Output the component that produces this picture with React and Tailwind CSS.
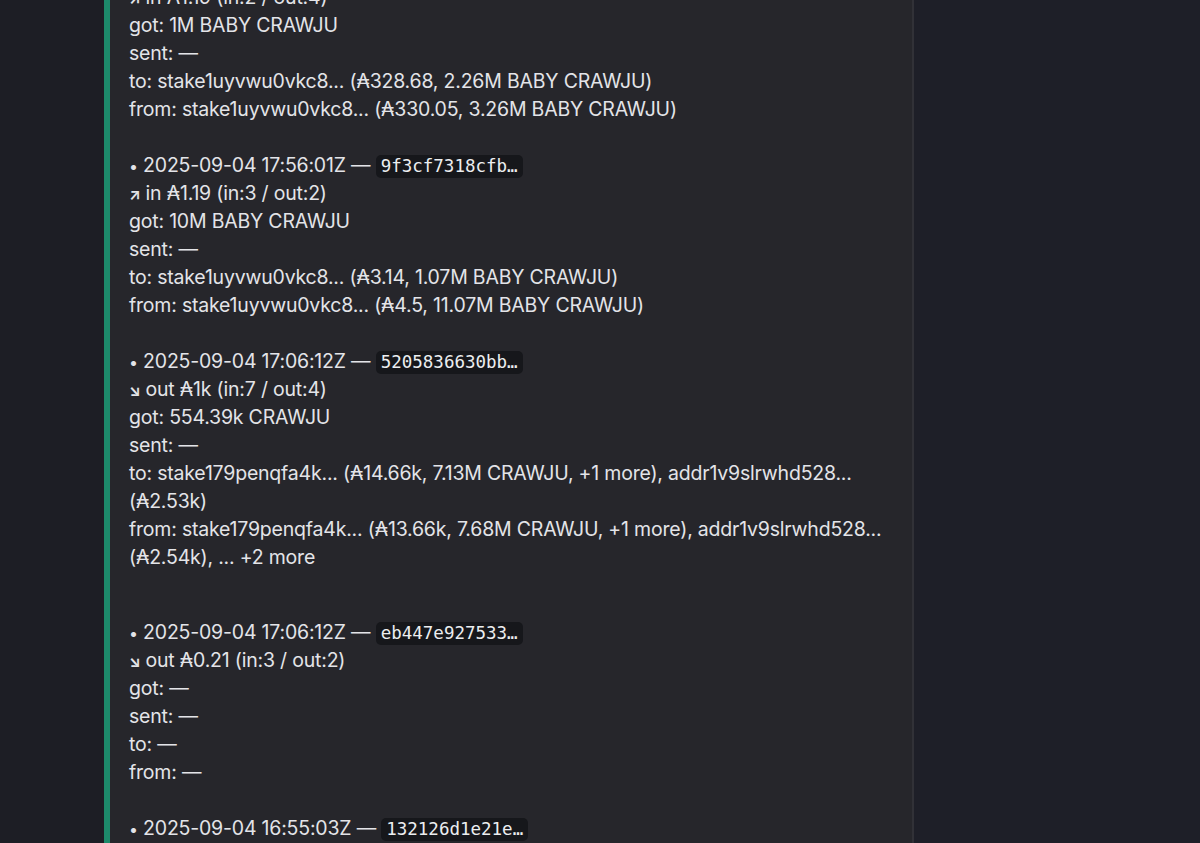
import React from 'react';

// Discord-style embed listing wallet transactions
const entries = [
    {
        head: null,
        dir: '↗',
        lines: [
            'in ₳1.19 (in:2 / out:4)',
            'got: 1M BABY CRAWJU',
            'sent: —',
            'to: stake1uyvwu0vkc8... (₳328.68, 2.26M BABY CRAWJU)',
            'from: stake1uyvwu0vkc8... (₳330.05, 3.26M BABY CRAWJU)',
        ],
    },
    {
        head: { time: '2025-09-04 17:56:01Z', hash: '9f3cf7318cfb…' },
        dir: '↗',
        lines: [
            'in ₳1.19 (in:3 / out:2)',
            'got: 10M BABY CRAWJU',
            'sent: —',
            'to: stake1uyvwu0vkc8... (₳3.14, 1.07M BABY CRAWJU)',
            'from: stake1uyvwu0vkc8... (₳4.5, 11.07M BABY CRAWJU)',
        ],
    },
    {
        head: { time: '2025-09-04 17:06:12Z', hash: '5205836630bb…' },
        dir: '↘',
        lines: [
            'out ₳1k (in:7 / out:4)',
            'got: 554.39k CRAWJU',
            'sent: —',
            'to: stake179penqfa4k... (₳14.66k, 7.13M CRAWJU, +1 more), addr1v9slrwhd528...',
            '(₳2.53k)',
            'from: stake179penqfa4k... (₳13.66k, 7.68M CRAWJU, +1 more), addr1v9slrwhd528...',
            '(₳2.54k), ... +2 more',
        ],
        gapAfter: true,
    },
    {
        head: { time: '2025-09-04 17:06:12Z', hash: 'eb447e927533…' },
        dir: '↘',
        lines: [
            'out ₳0.21 (in:3 / out:2)',
            'got: —',
            'sent: —',
            'to: —',
            'from: —',
        ],
    },
    {
        head: { time: '2025-09-04 16:55:03Z', hash: '132126d1e21e…' },
        lines: [],
    },
];

const Code = ({ children }) => (
    <code className="inline-block h-[23px] leading-[23px] px-[5px] rounded-[5px] bg-[#16171b] text-[17.5px] tracking-normal text-[#eceef0] align-middle"
        style={{ fontFamily: "'DejaVu Sans Mono', 'Liberation Mono', monospace" }}>
        {children}
    </code>
);

const Entry = ({ entry }) => (
    <div className={entry.gapAfter ? 'mb-[47px]' : 'mb-[28px]'}>
        {entry.head && (
            <div className="h-[28px] whitespace-nowrap">
                <span className="text-[16px]">•</span> {entry.head.time} — <Code>{entry.head.hash}</Code>
            </div>
        )}
        {entry.lines.map((line, i) => (
            <div key={i} className="h-[28px] whitespace-nowrap">
                {i === 0 && entry.dir && <span className="text-[15px] font-bold mr-[5px]">{entry.dir}</span>}
                {line}
            </div>
        ))}
    </div>
);

export default function App() {
    return (
        <div className="w-[1200px] h-[843px] overflow-hidden flex bg-[#1e1f26]"
            style={{ fontFamily: "'Inter', 'Noto Sans', 'DejaVu Sans', sans-serif" }}>
            <div className="w-[104px] flex-none bg-[#1d1e25]" />
            <div className="w-[810px] flex-none bg-[#26262b] border-l-[6px] border-[#1d8a6b] border-r-2 border-r-[#313137] overflow-hidden">
                <div className="mt-[-17px] pl-[19px] text-[19.5px] tracking-[-0.2px] leading-[28px] text-[#e3e4e8]">
                    {entries.map((e, i) => <Entry key={i} entry={e} />)}
                </div>
            </div>
            <div className="flex-1 bg-[#1e1f28]" />
        </div>
    );
}
